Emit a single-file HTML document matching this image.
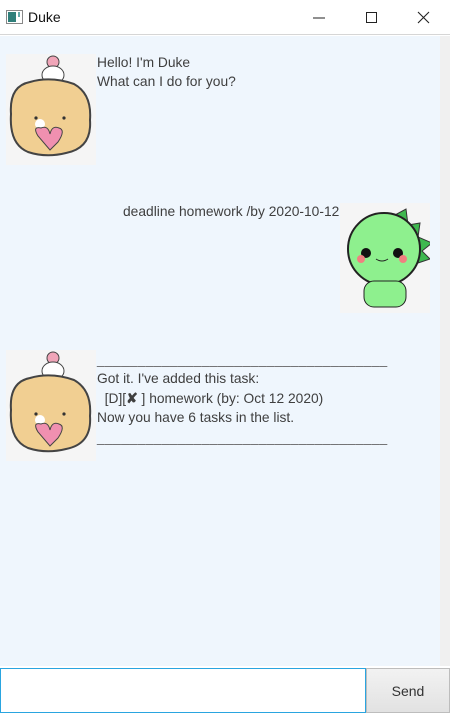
<!DOCTYPE html>
<html><head><meta charset="utf-8"><style>
*{margin:0;padding:0;box-sizing:border-box}
body{width:450px;height:713px;overflow:hidden;background:#fff;font-family:"Liberation Sans",sans-serif;position:relative}
.title{position:absolute;left:0;top:0;width:450px;height:35px;background:#fff;border-bottom:1px solid #d6d6d6}
.title .t{position:absolute;left:28px;top:9px;font-size:14px;color:#111}
.chat{position:absolute;left:0;top:36px;width:440px;height:630px;background:#eff6fd}
.sb{position:absolute;left:440px;top:36px;width:10px;height:630px;background:#f0f0f0}
.txt{position:absolute;font-size:13.8px;color:#3f3f3f;line-height:19.4px;white-space:pre}
.av{position:absolute;background:#f5f5f5}
.inp{position:absolute;left:0;top:668px;width:366px;height:45px;background:#fff;border:1.5px solid #2aa5e0}
.btn{position:absolute;left:366px;top:668px;width:84px;height:45px;background:linear-gradient(#f2f2f2,#e2e2e2);border:1px solid #bdbdbd;font-size:14px;color:#333;text-align:center;line-height:45px}
.ul{color:#666;letter-spacing:0.4px}
</style></head><body>
<div class="title">
<svg style="position:absolute;left:6px;top:10px" width="17" height="14"><rect x="0.5" y="0.5" width="16" height="13" fill="#fff" stroke="#888"/><rect x="2" y="2" width="8" height="10" fill="#2f7f7a"/><rect x="12" y="2" width="2" height="5" fill="#6aa"/></svg>
<div class="t">Duke</div>
<svg style="position:absolute;left:310px;top:10px" width="130" height="16"><line x1="3" y1="8" x2="15" y2="8" stroke="#222"/><rect x="56.5" y="2.5" width="10" height="10" fill="none" stroke="#222"/><path d="M108 2L119 13M119 2L108 13" stroke="#222" stroke-width="1.1"/></svg>
</div>
<div class="chat"></div>
<div class="sb"></div>

<svg class="av" style="left:6px;top:54px" width="90" height="111" viewBox="0 0 90 111">
<rect width="90" height="111" fill="#f5f5f5"/>
<circle cx="47" cy="8" r="6" fill="#f0a5b8" stroke="#444"/>
<ellipse cx="47" cy="21" rx="11" ry="9" fill="#fff" stroke="#444"/>
<path d="M5 60 Q3 32 24 28 Q45 22 68 30 Q86 40 84 66 Q86 94 60 99 Q40 104 22 98 Q3 90 5 60Z" fill="#f1cf92" stroke="#444" stroke-width="2"/>
<circle cx="34" cy="70" r="5" fill="#fff"/>
<path d="M32 82 Q26 72 35 74 Q42 71 44 80 Q46 71 53 74 Q60 76 52 88 L44 96Z" fill="#f090b0" stroke="#444"/>
<circle cx="30" cy="64" r="1.6" fill="#333"/><circle cx="58" cy="64" r="1.6" fill="#333"/>
</svg>
<div class="txt" style="left:97px;top:53px">Hello! I'm Duke
What can I do for you?</div>

<div class="txt" style="left:123px;top:202px">deadline homework /by 2020-10-12</div>
<svg class="av" style="left:340px;top:203px" width="90" height="110" viewBox="0 0 90 110">
<rect width="90" height="110" fill="#f5f5f5"/>
<path d="M55 12 L66 6 L68 22 L80 20 L78 34 L92 40 L82 48 L90 56 L78 60Z" fill="#3fb84f" stroke="#333"/>
<circle cx="44" cy="46" r="36" fill="#8ef08e" stroke="#222" stroke-width="2"/>
<circle cx="26" cy="50" r="5" fill="#111"/><circle cx="58" cy="50" r="5" fill="#111"/>
<circle cx="21" cy="56" r="4" fill="#f08080"/><circle cx="63" cy="56" r="4" fill="#f08080"/>
<path d="M36 56 Q42 60 48 56" fill="none" stroke="#222"/>
<rect x="24" y="78" width="42" height="26" rx="10" fill="#8ef08e" stroke="#222"/>
</svg>

<svg class="av" style="left:6px;top:350px" width="90" height="111" viewBox="0 0 90 111">
<rect width="90" height="111" fill="#f5f5f5"/>
<circle cx="47" cy="8" r="6" fill="#f0a5b8" stroke="#444"/>
<ellipse cx="47" cy="21" rx="11" ry="9" fill="#fff" stroke="#444"/>
<path d="M5 60 Q3 32 24 28 Q45 22 68 30 Q86 40 84 66 Q86 94 60 99 Q40 104 22 98 Q3 90 5 60Z" fill="#f1cf92" stroke="#444" stroke-width="2"/>
<circle cx="34" cy="70" r="5" fill="#fff"/>
<path d="M32 82 Q26 72 35 74 Q42 71 44 80 Q46 71 53 74 Q60 76 52 88 L44 96Z" fill="#f090b0" stroke="#444"/>
<circle cx="30" cy="64" r="1.6" fill="#333"/><circle cx="58" cy="64" r="1.6" fill="#333"/>
</svg>
<div class="txt" style="left:97px;top:350px"><span class="ul">____________________________________</span>
Got it. I've added this task:
  [D][<b>✘</b> ] homework (by: Oct 12 2020)
Now you have 6 tasks in the list.
<span class="ul">____________________________________</span></div>

<div class="inp"></div>
<div class="btn">Send</div>
</body></html>
